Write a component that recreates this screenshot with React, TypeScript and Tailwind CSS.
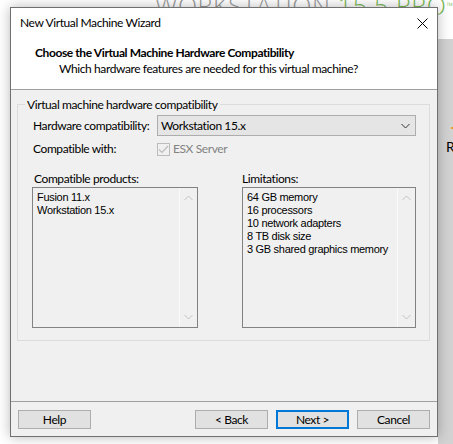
const ui = { fontFamily: 'Lato, "Noto Sans", sans-serif', letterSpacing: "-0.4px" };
const list = { fontFamily: '"Liberation Sans", Arial, sans-serif', letterSpacing: "-0.3px" };

function Chevron({ up, color = "#c2c2c2" }: { up?: boolean; color?: string }) {
  return (
    <svg width="9" height="6" viewBox="0 0 9 6" fill="none">
      <path
        d={up ? "M0.5 5L4.5 1L8.5 5" : "M0.5 1L4.5 5L8.5 1"}
        stroke={color}
        strokeWidth="1"
      />
    </svg>
  );
}

function ListBox({ items, width }: { items: string[]; width: string }) {
  return (
    <div className={`flex h-[141px] ${width} border border-[#828282] bg-[#f0f0f0]`}>
      <div className="flex-1 pl-[4px] pt-[3px] text-[11px] leading-[13px] text-black" style={list}>
        {items.map((it) => (
          <div key={it} className="whitespace-nowrap">{it}</div>
        ))}
      </div>
      <div className="flex w-[18px] flex-col items-center justify-between border-l border-[#fafafa] py-[7px]">
        <Chevron up />
        <Chevron />
      </div>
    </div>
  );
}

function Btn({ label, primary }: { label: string; primary?: boolean }) {
  return (
    <button
      className={`flex h-[19px] w-[73px] items-center justify-center bg-[#e1e1e1] text-[12px] text-black ${
        primary ? "border-2 border-[#0078d7]" : "border border-[#adadad]"
      }`}
      style={ui}
    >
      {label}
    </button>
  );
}

export default function App() {
  return (
    <div className="relative h-[444px] w-[453px] overflow-hidden bg-white" style={ui}>
      {/* background app behind the dialog */}
      <div
        className="absolute left-[155px] top-[-7px] whitespace-nowrap text-[25px] font-light leading-[25px] tracking-[0.6px]"
        style={{ fontFamily: '"Open Sans", "Noto Sans", sans-serif' }}
      >
        <span className="text-[#9a9a9a]">WORKSTATION </span>
        <span className="text-[#76b852]">15.5 PRO</span>
        <span className="align-top text-[9px] text-[#76b852]">™</span>
      </div>
      <div className="absolute left-[438px] top-[39px] h-[405px] w-[15px] bg-[#d2d2d2]">
        <div className="ml-[13px] mt-[88px] h-[2px] w-[3px] bg-[#f0a020]" />
        <div className="ml-[8px] mt-[9px] text-[14px] leading-[18px] text-black">R</div>
      </div>

      {/* dialog window */}
      <div className="absolute left-[10px] top-[7px] flex h-[430px] w-[428px] flex-col border border-[#707070] bg-[#f0f0f0] shadow-[0_0_12px_rgba(0,0,0,0.28)]">
        <div className="flex h-[30px] items-center justify-between bg-white pl-[9px] pr-[9px]">
          <span className="text-[12px] text-black">New Virtual Machine Wizard</span>
          <svg width="11" height="11" viewBox="0 0 11 11">
            <path d="M0.5 0.5L10.5 10.5M10.5 0.5L0.5 10.5" stroke="#000" strokeWidth="1" />
          </svg>
        </div>
        <div className="h-[52px] border-b border-[#a0a0a0] bg-white pl-[24px] pt-[7px] text-[12px] leading-[16px] text-black">
          <div className="font-bold">Choose the Virtual Machine Hardware Compatibility</div>
          <div className="pl-[24px]">Which hardware features are needed for this virtual machine?</div>
        </div>

        <div className="flex-1 pl-[6px] pt-[14px]">
          <div className="relative h-[237px] w-[413px] border border-[#dcdcdc]">
            <span className="absolute left-[7px] top-[-8px] bg-[#f0f0f0] px-[2px] text-[12px] leading-[16px] text-black">
              Virtual machine hardware compatibility
            </span>
            <div className="flex items-center pl-[15px] pt-[10px] text-[12px] text-black">
              <span className="w-[124px] whitespace-nowrap">Hardware compatibility:</span>
              <div className="flex h-[21px] w-[259px] items-center justify-between border border-[#adadad] bg-[#e5e5e5] pl-[3px] pr-[5px]">
                <span>Workstation 15.x</span>
                <Chevron color="#333" />
              </div>
            </div>
            <div className="flex items-center pl-[15px] pt-[4px] text-[12px]">
              <span className="w-[124px] text-black">Compatible with:</span>
              <span className="flex h-[13px] w-[13px] items-center justify-center border border-[#bcbcbc] bg-[#f0f0f0]">
                <svg width="11" height="9" viewBox="0 0 11 9">
                  <path d="M1 4.5L4 7.5L10 1" stroke="#bcbcbc" strokeWidth="1.2" fill="none" />
                </svg>
              </span>
              <span className="pl-[3px] text-[#838383]">ESX Server</span>
            </div>
            <div className="flex pl-[14px] pt-[13px] text-[12px] text-black">
              <div className="w-[210px]">
                <div className="pl-[2px] leading-[16px]">Compatible products:</div>
                <ListBox width="w-[166px]" items={["Fusion 11.x", "Workstation 15.x"]} />
              </div>
              <div>
                <div className="leading-[16px]">Limitations:</div>
                <ListBox
                  width="w-[174px]"
                  items={[
                    "64 GB memory",
                    "16 processors",
                    "10 network adapters",
                    "8 TB disk size",
                    "3 GB shared graphics memory",
                  ]}
                />
              </div>
            </div>
          </div>
        </div>

        <div className="flex h-[35px] items-start border-t border-[#a0a0a0] pl-[7px] pr-[7px] pt-[8px]">
          <Btn label="Help" />
          <div className="flex-1" />
          <div className="flex gap-[8px]">
            <Btn label="< Back" />
            <Btn label="Next >" primary />
            <Btn label="Cancel" />
          </div>
        </div>
      </div>
    </div>
  );
}
